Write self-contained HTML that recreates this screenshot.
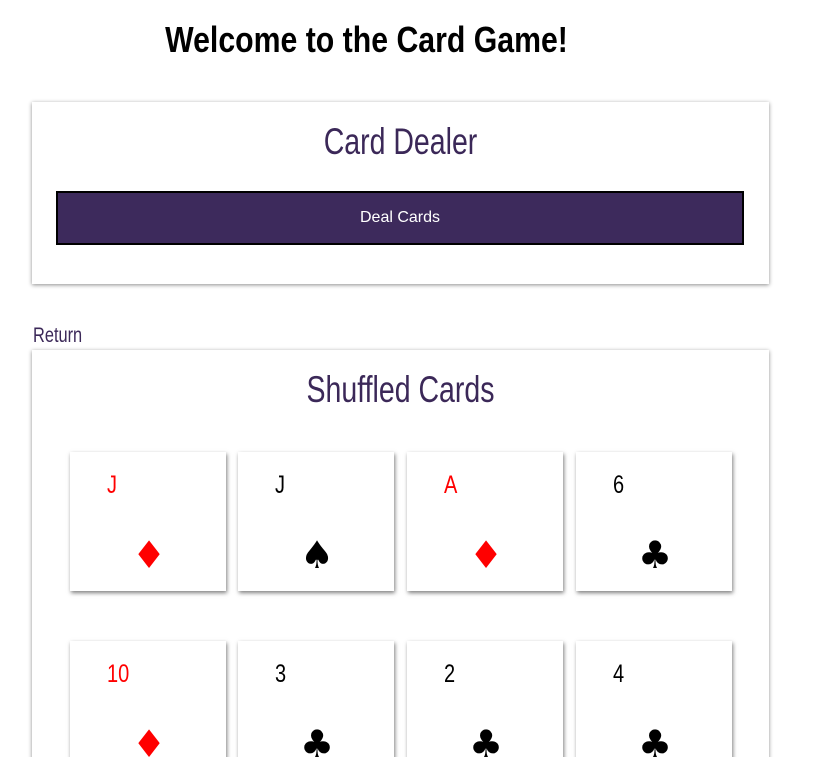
<!DOCTYPE html>
<html><head><style>
html,body{margin:0;background:#fff;width:823px;height:757px;overflow:hidden}
body{position:relative;font-family:"Liberation Sans",sans-serif}
.ab{position:absolute}
h1{position:absolute;left:0;width:733px;top:19px;margin:0;text-align:center;font-size:36px;font-weight:bold;color:#000;transform:scaleX(.84);}
.panel{position:absolute;left:32px;width:737px;background:#fff;box-shadow:0 1px 4px rgba(0,0,0,.45);}
.t{position:absolute;left:0;right:0;text-align:center;color:#3b2858;font-size:37px;transform:scaleX(.77)}
.btn{position:absolute;left:24px;top:89px;width:684px;height:50px;background:#3d2a5c;border:2px solid #000;color:#fff;font-size:16px;text-align:center;line-height:50px}
.card{position:absolute;width:156px;height:139px;background:#fff;box-shadow:1px 2px 4px rgba(0,0,0,.5)}
.r{position:absolute;left:37px;top:18px;font-size:25px;line-height:30px;transform:scaleX(.8);transform-origin:left}
.s{position:absolute;left:62px;top:83px;font-size:38px;line-height:40px;font-family:"DejaVu Sans",sans-serif}
.red{color:#f00}
</style></head><body>
<h1>Welcome to the Card Game!</h1>
<div class="panel" style="top:102px;height:182px">
<div class="t" style="top:19px">Card Dealer</div>
<div class="btn">Deal Cards</div>
</div>
<div class="ab" style="left:33px;top:324px;font-size:21px;color:#3b2858;transform:scaleX(.78);transform-origin:left">Return</div>
<div class="panel" style="top:350px;height:420px">
<div class="t" style="top:19px">Shuffled Cards</div>
</div>
<div class="card" style="left:70px;top:452px"><div class="r red">J</div><div class="s red">♦</div></div>
<div class="card" style="left:238px;top:452px"><div class="r">J</div><div class="s">♠</div></div>
<div class="card" style="left:407px;top:452px"><div class="r red">A</div><div class="s red">♦</div></div>
<div class="card" style="left:576px;top:452px"><div class="r">6</div><div class="s">♣</div></div>
<div class="card" style="left:70px;top:641px"><div class="r red">10</div><div class="s red">♦</div></div>
<div class="card" style="left:238px;top:641px"><div class="r">3</div><div class="s">♣</div></div>
<div class="card" style="left:407px;top:641px"><div class="r">2</div><div class="s">♣</div></div>
<div class="card" style="left:576px;top:641px"><div class="r">4</div><div class="s">♣</div></div>
</body></html>
